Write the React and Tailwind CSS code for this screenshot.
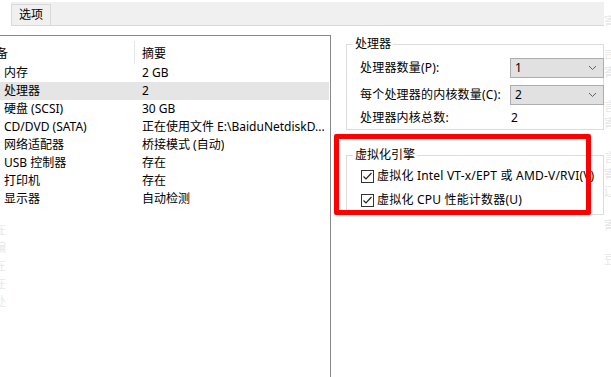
import React from 'react';

const font = { fontFamily: '"Noto Sans", "Noto Sans CJK SC", sans-serif' };

const devices = [
  ['内存', '2 GB'],
  ['处理器', '2'],
  ['硬盘 (SCSI)', '30 GB'],
  ['CD/DVD (SATA)', '正在使用文件 E:\\BaiduNetdiskD...'],
  ['网络适配器', '桥接模式 (自动)'],
  ['USB 控制器', '存在'],
  ['打印机', '存在'],
  ['显示器', '自动检测'],
];

function Select({ value }) {
  return (
    <div className="w-[94px] h-[20px] bg-[#e1e1e1] border border-[#adadad] flex items-center justify-between pl-[4px] pr-[6px]">
      <span>{value}</span>
      <svg width="9" height="6" viewBox="0 0 9 6">
        <path d="M1 1l3.5 3.5L8 1" fill="none" stroke="#606060" strokeWidth="1" />
      </svg>
    </div>
  );
}

function Check({ label }) {
  return (
    <div className="h-[18px] flex items-center gap-[3px]">
      <div className="w-[13px] h-[13px] border border-[#333] bg-white flex items-center justify-center">
        <svg width="11" height="11" viewBox="0 0 11 11">
          <path d="M1.5 5.5l2.5 2.5 5.5-6" fill="none" stroke="#222" strokeWidth="1.2" />
        </svg>
      </div>
      <span className="whitespace-nowrap tracking-[0.2px]">{label}</span>
    </div>
  );
}

export default function App() {
  return (
    <div className="w-[611px] h-[377px] bg-white relative overflow-hidden text-[12px] text-black leading-[16px]" style={font}>
      {/* tab strip */}
      <div className="flex h-[26px] pt-[2px]">
        <div className="w-[11px]" />
        <div className="w-[593px] bg-[#f0f0f0] border-b border-[#d9d9d9] flex items-end">
          <div className="h-[21px] w-[40px] border border-b-0 border-[#d9d9d9] bg-[#f0f0f0] flex items-center justify-center">
            选项
          </div>
        </div>
      </div>

      <div className="flex mt-[9px]">
        {/* device list */}
        <div className="w-[331px] h-[342px] border-t border-r border-[#888] pr-[1px]">
          <div className="h-[28px] flex pt-[5px]">
            <div className="w-[135px] border-r border-[#e5e5e5] overflow-hidden pt-[5px]">
              <span className="ml-[-16px] whitespace-nowrap">设备</span>
            </div>
            <div className="pl-[7px] pt-[5px]">摘要</div>
          </div>
          {devices.map(([name, sum], i) => (
            <div key={name} className={`h-[18px] flex items-center ${i === 1 ? 'bg-[#e5e5e5]' : ''}`}>
              <div className="w-[142px] pl-[4px] whitespace-nowrap">{name}</div>
              <div className="whitespace-nowrap overflow-hidden">{sum}</div>
            </div>
          ))}
        </div>

        {/* settings */}
        <div className="pl-[15px] pt-[1px] w-[273px]">
          <fieldset className="border border-[#dcdcdc] px-[13px] pb-[3px]">
            <legend className="px-[2px] ml-[-7px]">处理器</legend>
            <div className="mt-[6px] flex items-center justify-between h-[20px] mr-[-14px]">
              <span className="tracking-[0.2px]">处理器数量(P):</span>
              <Select value="1" />
            </div>
            <div className="mt-[7px] flex items-center justify-between h-[20px] mr-[-14px]">
              <span className="tracking-[0.2px]">每个处理器的内核数量(C):</span>
              <Select value="2" />
            </div>
            <div className="mt-[5px] flex items-center h-[16px]">
              <span className="w-[151px] tracking-[0.2px]">处理器内核总数:</span>
              <span>2</span>
            </div>
          </fieldset>

          <fieldset className="mt-[17px] border border-[#dcdcdc] pl-[14px] pb-[5px]">
            <legend className="px-[2px] ml-[-8px]">虚拟化引擎</legend>
            <div className="mt-[4px]">
              <Check label="虚拟化 Intel VT-x/EPT 或 AMD-V/RVI(V)" />
              <div className="mt-[6px]">
                <Check label="虚拟化 CPU 性能计数器(U)" />
              </div>
            </div>
          </fieldset>
        </div>
      </div>

      {/* ghost text at edges */}
      <div className="absolute left-[604px] top-[14px] flex flex-col text-[#e6e6e6] leading-[16px]">
        {['寄', '', '司', '寄', '', '言', '寄', '', '言', '寄', '辽', '', '寄', '', '豆'].map((c, i) => (
          <span key={i} className="h-[17px]">{c}</span>
        ))}
      </div>
      <div className="absolute left-[-6px] top-[222px] flex flex-col text-[#e8e8e8] leading-[16px]">
        {['在', '编', '在', '在', '处'].map((c, i) => (
          <span key={i} className="h-[18px]">{c}</span>
        ))}
      </div>

      {/* annotation */}
      <div className="absolute left-[334px] top-[134px] w-[257px] h-[81px] border-[5px] border-[#ff0000] rounded-[2px]" />
    </div>
  );
}
